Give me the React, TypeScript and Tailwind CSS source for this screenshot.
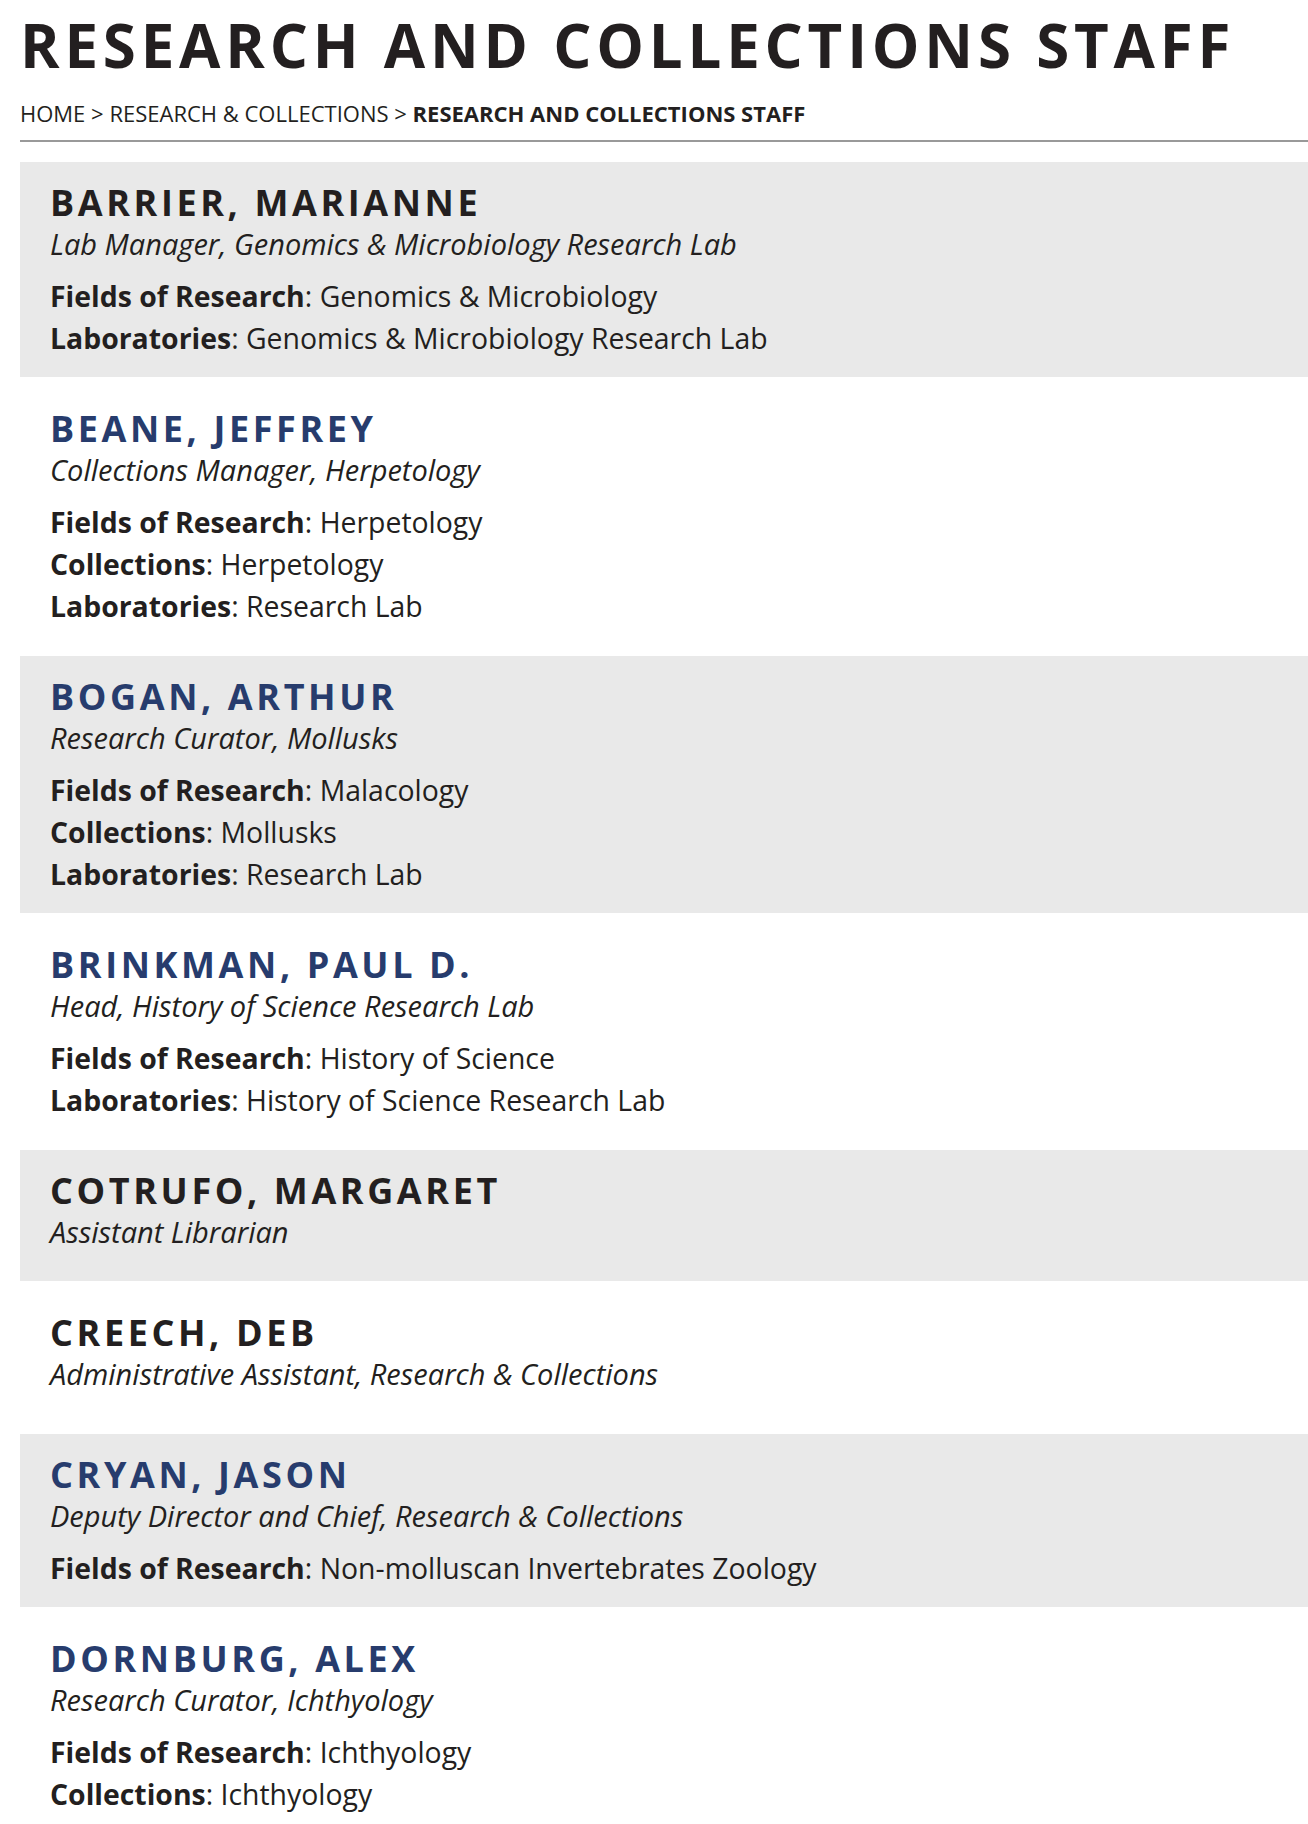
type Staff = {
  name: string;
  title: string;
  link?: boolean;
  fields?: [string, string][];
};

const staff: Staff[] = [
  {
    name: "Barrier, Marianne",
    title: "Lab Manager, Genomics & Microbiology Research Lab",
    fields: [
      ["Fields of Research", "Genomics & Microbiology"],
      ["Laboratories", "Genomics & Microbiology Research Lab"],
    ],
  },
  {
    name: "Beane, Jeffrey",
    title: "Collections Manager, Herpetology",
    link: true,
    fields: [
      ["Fields of Research", "Herpetology"],
      ["Collections", "Herpetology"],
      ["Laboratories", "Research Lab"],
    ],
  },
  {
    name: "Bogan, Arthur",
    title: "Research Curator, Mollusks",
    link: true,
    fields: [
      ["Fields of Research", "Malacology"],
      ["Collections", "Mollusks"],
      ["Laboratories", "Research Lab"],
    ],
  },
  {
    name: "Brinkman, Paul D.",
    title: "Head, History of Science Research Lab",
    link: true,
    fields: [
      ["Fields of Research", "History of Science"],
      ["Laboratories", "History of Science Research Lab"],
    ],
  },
  { name: "Cotrufo, Margaret", title: "Assistant Librarian" },
  { name: "Creech, Deb", title: "Administrative Assistant, Research & Collections" },
  {
    name: "Cryan, Jason",
    title: "Deputy Director and Chief, Research & Collections",
    link: true,
    fields: [["Fields of Research", "Non-molluscan Invertebrates Zoology"]],
  },
  {
    name: "Dornburg, Alex",
    title: "Research Curator, Ichthyology",
    link: true,
    fields: [
      ["Fields of Research", "Ichthyology"],
      ["Collections", "Ichthyology"],
      ["Laboratories", "Research Lab"],
    ],
  },
];

function StaffCard({ person }: { person: Staff }) {
  return (
    <li className="px-[30px] pt-[21px] pb-[18px] odd:bg-[#e9e9e9]">
      <h2
        className={`text-[36px] leading-[40px] font-bold uppercase tracking-[0.1em] ${
          person.link ? "text-[#273c6d]" : "text-[#231f20]"
        }`}
      >
        {person.name}
      </h2>
      <p className="text-[29px] leading-[42px] italic mb-[10px]">{person.title}</p>
      {person.fields?.map(([label, value]) => (
        <p key={label} className="text-[28.4px] leading-[42px]">
          <strong className="font-bold">{label}</strong>: {value}
        </p>
      ))}
    </li>
  );
}

export default function App() {
  return (
    <div className="min-h-screen bg-white pl-5 pt-[15px] text-[#231f20] font-['Open_Sans','Lato',sans-serif]">
      <h1 className="text-[60px] leading-[60px] font-bold uppercase tracking-[0.08em]">
        Research and Collections Staff
      </h1>
      <nav className="mt-[23px] text-[22px] leading-[30px] uppercase">
        <a href="#">Home</a> &gt; <a href="#">Research &amp; Collections</a> &gt;{" "}
        <span className="font-bold">Research and Collections Staff</span>
      </nav>
      <hr className="mt-[12px] border-0 h-[2px] bg-[#999999]" />
      <ul className="mt-[20px] flex flex-col gap-[11px]">
        {staff.map((p) => (
          <StaffCard key={p.name} person={p} />
        ))}
      </ul>
    </div>
  );
}
